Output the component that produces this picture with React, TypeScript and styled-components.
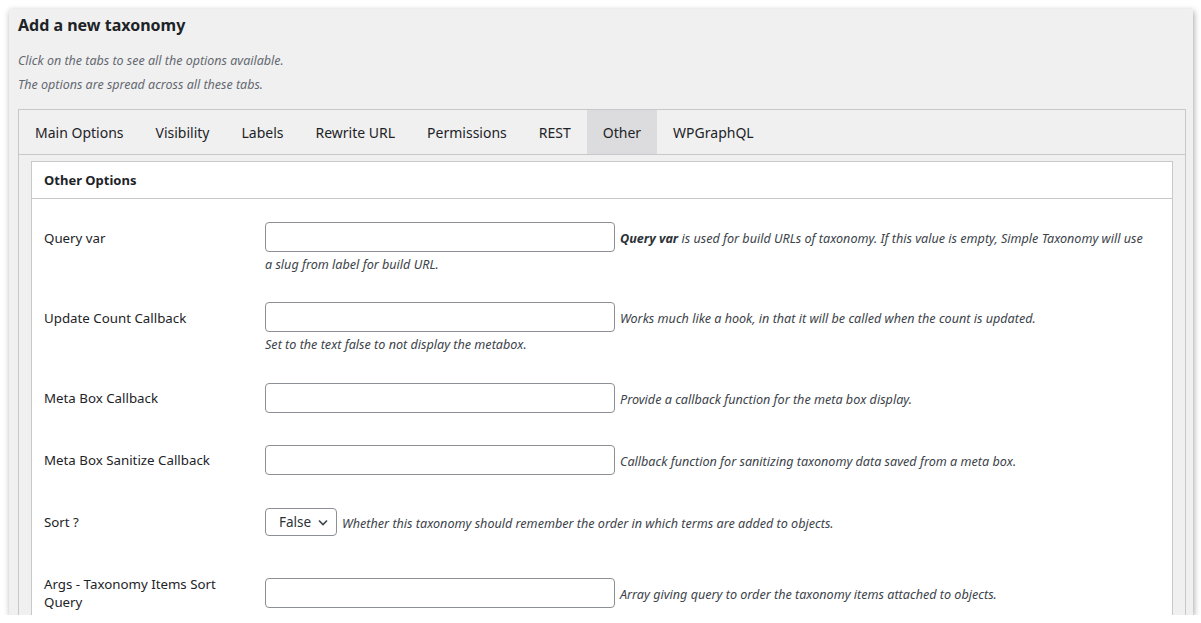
import React from 'react';
import styled, { createGlobalStyle } from 'styled-components';

const Global = createGlobalStyle`
  html, body { margin: 0; padding: 0; background: #ffffff; }
  body { font-family: "Noto Sans", "Segoe UI", sans-serif; color: #1d2327; }
  * { box-sizing: border-box; }
`;

const Frame = styled.div`
  margin: 9px 0 0 9px;
  width: 1184px;
  height: 606px;
  overflow: hidden;
  background: #f0f0f0;
  box-shadow: 1px 2px 6px rgba(0, 0, 0, 0.35);
  padding: 5px 7px 0 9px;
`;

const Title = styled.h1`
  margin: 0;
  font-size: 16px;
  line-height: 22px;
  font-weight: 700;
  color: #1d2327;
`;

const Intro = styled.p<{ $gap: number }>`
  margin: ${(p) => p.$gap}px 0 0;
  font-size: 12.5px;
  line-height: 20px;
  font-style: italic;
  color: #646970;
`;

const TabBox = styled.div`
  margin-top: 14px;
  border: 1px solid #c8c8cb;
`;

const TabBar = styled.div`
  display: flex;
  border-bottom: 1px solid #c8c8cb;
`;

const Tab = styled.div<{ $active?: boolean }>`
  padding: 0 16px;
  height: 44px;
  line-height: 45px;
  font-size: 14px;
  color: #1d2327;
  background: ${(p) => (p.$active ? '#dcdcde' : 'transparent')};
  cursor: pointer;
`;

const TabBody = styled.div`
  padding: 6px 12px 0;
`;

const Panel = styled.div`
  background: #ffffff;
  border: 1px solid #c8c8cb;
`;

const PanelHeader = styled.h2`
  margin: 0;
  padding: 8px 12px;
  font-size: 13px;
  line-height: 20px;
  font-weight: 700;
  color: #1d2327;
  border-bottom: 1px solid #c8c8cb;
`;

const Rows = styled.div`
  padding: 8px 12px 0;
`;

const Row = styled.div`
  display: grid;
  grid-template-columns: 210px 1fr;
`;

const Label = styled.div`
  padding: 22px 10px 22px 0;
  font-size: 13.3px;
  line-height: 18px;
  color: #1d2327;
`;

const Field = styled.div`
  align-self: center;
  padding: 15px 10px 15px 11px;
  font-size: 12.6px;
  line-height: 20px;
`;

const TextInput = styled.input`
  display: inline-block;
  vertical-align: middle;
  width: 350px;
  height: 30px;
  margin: 0;
  padding: 0 8px;
  border: 1px solid #8c8f94;
  border-radius: 4px;
  background: #ffffff;
  font: inherit;
`;

const Desc = styled.span`
  margin-left: 5px;
  vertical-align: -3px;
  line-height: 14px;
  font-style: italic;
  color: #3c434a;
  strong {
    font-weight: 700;
    color: #2c3338;
  }
`;

const SelectWrap = styled.span`
  position: relative;
  display: inline-block;
  vertical-align: middle;
`;

const Select = styled.select`
  appearance: none;
  -webkit-appearance: none;
  width: 72px;
  height: 28px;
  margin: 0;
  padding: 0 24px 0 13px;
  border: 1px solid #8c8f94;
  border-radius: 4px;
  background: #ffffff;
  font-family: inherit;
  font-size: 13.5px;
  color: #2c3338;
`;

const Chevron = styled.svg`
  position: absolute;
  right: 9px;
  top: 11px;
  width: 10px;
  height: 7px;
  pointer-events: none;
`;

type RowDef = {
  label: string;
  desc: React.ReactNode;
  select?: boolean;
};

const rows: RowDef[] = [
  {
    label: 'Query var',
    desc: (
      <>
        <strong>Query var</strong> is used for build URLs of taxonomy. If this value is empty, Simple Taxonomy will use a slug from label for build URL.
      </>
    ),
  },
  {
    label: 'Update Count Callback',
    desc: (
      <>
        Works much like a hook, in that it will be called when the count is updated.
        <br />
        Set to the text false to not display the metabox.
      </>
    ),
  },
  { label: 'Meta Box Callback', desc: 'Provide a callback function for the meta box display.' },
  { label: 'Meta Box Sanitize Callback', desc: 'Callback function for sanitizing taxonomy data saved from a meta box.' },
  {
    label: 'Sort ?',
    desc: 'Whether this taxonomy should remember the order in which terms are added to objects.',
    select: true,
  },
  { label: 'Args - Taxonomy Items Sort Query', desc: 'Array giving query to order the taxonomy items attached to objects.' },
];

const tabs = ['Main Options', 'Visibility', 'Labels', 'Rewrite URL', 'Permissions', 'REST', 'Other', 'WPGraphQL'];

export default function App() {
  return (
    <>
      <Global />
      <Frame>
        <Title>Add a new taxonomy</Title>
        <Intro $gap={15}>Click on the tabs to see all the options available.</Intro>
        <Intro $gap={4}>The options are spread across all these tabs.</Intro>
        <TabBox>
          <TabBar>
            {tabs.map((t) => (
              <Tab key={t} $active={t === 'Other'}>
                {t}
              </Tab>
            ))}
          </TabBar>
          <TabBody>
            <Panel>
              <PanelHeader>Other Options</PanelHeader>
              <Rows>
                {rows.map((r) => (
                  <Row key={r.label}>
                    <Label>{r.label}</Label>
                    <Field>
                      {r.select ? (
                        <SelectWrap>
                          <Select defaultValue="false">
                            <option value="false">False</option>
                            <option value="true">True</option>
                          </Select>
                          <Chevron viewBox="0 0 10 7">
                            <path d="M1 1.5 L5 5.5 L9 1.5" fill="none" stroke="#3c434a" strokeWidth="1.6" />
                          </Chevron>
                        </SelectWrap>
                      ) : (
                        <TextInput type="text" />
                      )}
                      <Desc>{r.desc}</Desc>
                    </Field>
                  </Row>
                ))}
              </Rows>
            </Panel>
          </TabBody>
        </TabBox>
      </Frame>
    </>
  );
}
